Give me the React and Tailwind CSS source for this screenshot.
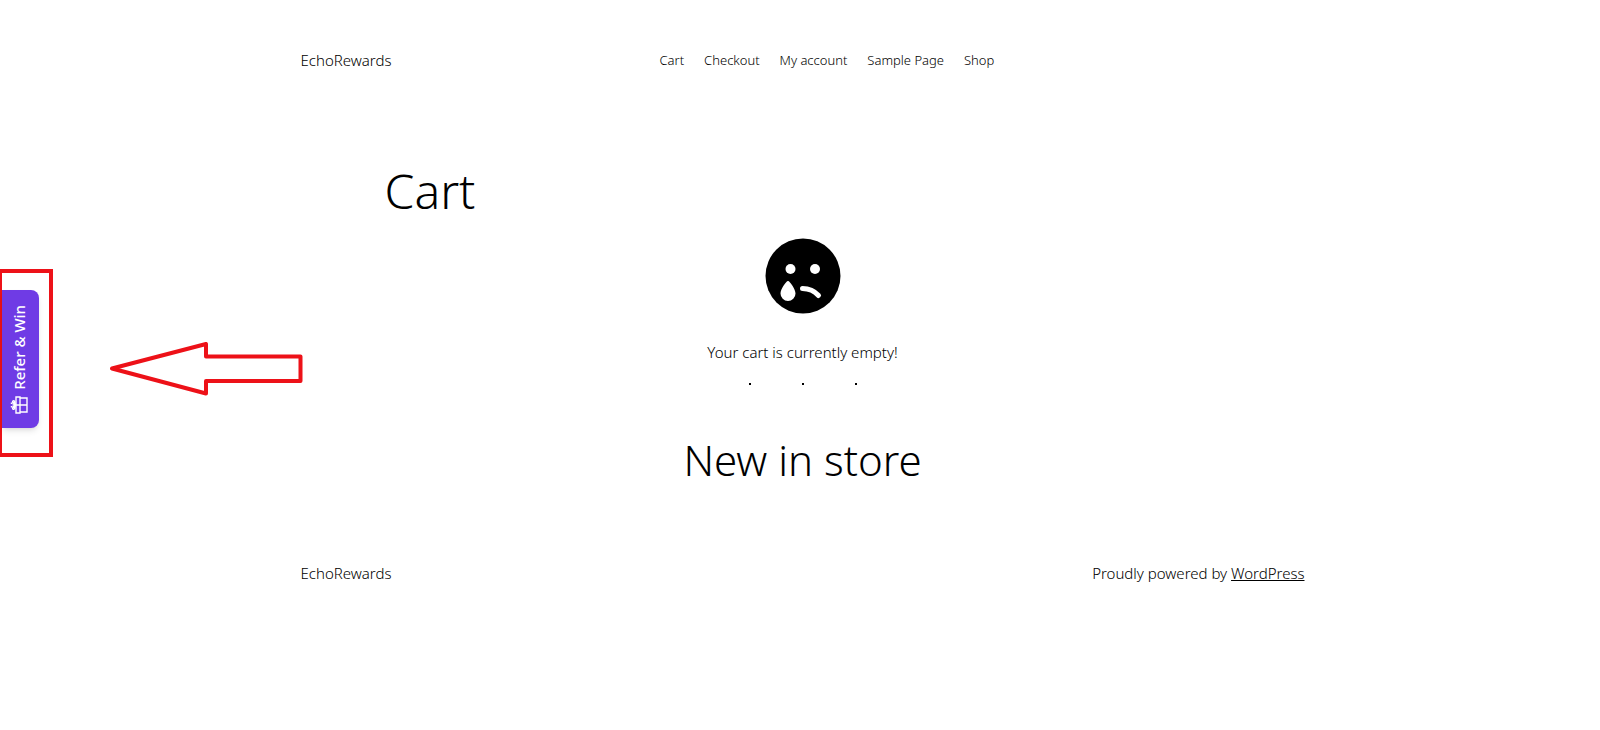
const links = ["Cart", "Checkout", "My account", "Sample Page", "Shop"];

function SadFace() {
  return (
    <svg viewBox="0 0 76 76" className="size-[76px]" aria-hidden="true">
      <circle cx="38" cy="38" r="37.5" fill="#000" />
      <circle cx="25.5" cy="31" r="5" fill="#fff" />
      <circle cx="50" cy="31" r="5" fill="#fff" />
      <path
        d="M23 43C21 43 15.500 51.500 15.500 55.500a7.500 7.500 0 0 0 15 0C30.500 51.500 25 43 23 43z"
        fill="#fff"
      />
      <path
        d="M37.500 50.500c6.500 0 12 2.500 16 7"
        fill="none"
        stroke="#fff"
        strokeWidth="5"
        strokeLinecap="round"
      />
    </svg>
  );
}

function GiftIcon() {
  return (
    <svg
      viewBox="0 0 18 18"
      className="size-[18px] -rotate-90"
      fill="none"
      stroke="#fff"
      strokeWidth="1.4"
      aria-hidden="true"
    >
      <path d="M1 6h16v4H1zM2 10v7h14v-7M9 6v11" />
      <path d="M9 5.500L5.500 4.500M9 5.500l3.500-1M9 5.500L7.500 2.500M9 5.500l1.500-3" />
      <circle cx="5.800" cy="3.600" r="1" />
      <circle cx="12.200" cy="3.600" r="1" />
      <path d="M6.500 1.500h1.500M10 1.500h1.500" />
    </svg>
  );
}

function ReferTab() {
  return (
    <div className="absolute top-[269px] left-0 flex h-[188px] w-[53px] items-center border-y-4 border-r-4 border-l-2 border-[#ed1118]">
      <button className="-mt-2 flex h-[138px] w-[37px] flex-col items-center justify-end gap-1.5 rounded-r-lg bg-[#6f3be5] pr-1 pb-3.5 text-white shadow-md">
        <span className="rotate-180 text-[15px] leading-5 font-medium [writing-mode:vertical-rl]">
          Refer &amp; Win
        </span>
        <GiftIcon />
      </button>
    </div>
  );
}

function Arrow() {
  return (
    <svg
      viewBox="0 0 194 54"
      className="absolute top-[342px] left-[109px] h-[54px] w-[194px]"
      fill="none"
      stroke="#ed1118"
      strokeWidth="4"
      strokeLinejoin="round"
      aria-hidden="true"
    >
      <path d="M3 26.500L97 2v12.500h94.500v24.500H97v12.500z" />
    </svg>
  );
}

export default function App() {
  return (
    <div className="relative min-h-screen bg-white pl-[5px] font-['Noto_Sans','Open_Sans',sans-serif] text-base font-light text-black">
      <div className="mx-auto max-w-[1004px]">
        <header className="grid grid-cols-[359px_1fr] items-center pt-12">
          <a href="#" className="text-[15px] leading-6">
            EchoRewards
          </a>
          <nav className="flex gap-5 text-[13px] leading-6">
            {links.map((link) => (
              <a key={link} href="#" className="whitespace-nowrap">
                {link}
              </a>
            ))}
          </nav>
        </header>

        <main className="mx-auto max-w-[836px] pt-[89px]">
          <h1 className="text-5xl leading-[60px]">Cart</h1>
          <div className="flex flex-col items-center pt-[17px]">
            <SadFace />
            <p className="pt-[26px] text-[15px] leading-6">Your cart is currently empty!</p>
            <div className="flex gap-[51px] pt-[19px] pb-[47px]">
              <span className="size-0.5 bg-black" />
              <span className="size-0.5 bg-black" />
              <span className="size-0.5 bg-black" />
            </div>
            <h2 className="text-[42px] leading-[56px]">New in store</h2>
          </div>
        </main>

        <footer className="flex items-center justify-between pt-[73px] text-[15px] leading-6">
          <a href="#">EchoRewards</a>
          <p>
            Proudly powered by{" "}
            <a href="#" className="underline">
              WordPress
            </a>
          </p>
        </footer>
      </div>

      <ReferTab />
      <Arrow />
    </div>
  );
}
